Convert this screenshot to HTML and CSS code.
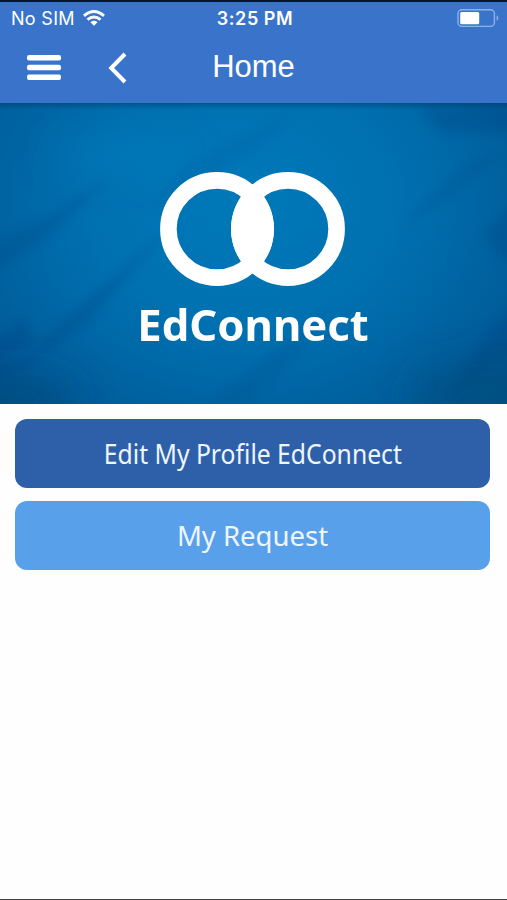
FILE: index.html
```html
<!DOCTYPE html>
<html lang="en">
<head>
  <meta charset="UTF-8">
  <meta name="viewport" content="width=device-width, initial-scale=1.0">
  <title>EdConnect</title>
  <link rel="stylesheet" href="styles.css">
</head>
<body>

<div class="screen">
  <header class="header">
    <div class="status-bar">
      <div class="carrier">
        <span>No SIM</span>
        <svg class="wifi" width="22" height="16" viewBox="0 0 22 16" fill="none" stroke="#fff" stroke-width="2.9">
          <path d="M1 5.8 Q11 -2.6 21 5.8"/>
          <path d="M4.5 9.6 Q11 4.3 17.5 9.6"/>
          <path d="M11 15.8 L7.4 12.2 Q11 9.4 14.6 12.2 Z" fill="#fff" stroke="none"/>
        </svg>
      </div>
      <div class="time">3:25 PM</div>
      <svg class="battery" width="42" height="18" viewBox="0 0 42 18">
        <rect x="1" y=".8" width="36.4" height="16.6" rx="4" fill="none" stroke="#8fb2e6" stroke-width="1.4"/>
        <rect x="3.2" y="3" width="19" height="12.2" rx="1.5" fill="#fff"/>
        <path d="M39.6 6.3 Q41.4 7.4 41.4 9.1 Q41.4 10.8 39.6 11.9 Z" fill="#8fb2e6"/>
      </svg>
    </div>

    <nav class="nav-bar">
      <div class="nav-left">
        <svg class="menu" width="34" height="26" viewBox="0 0 34 26" fill="#fff">
          <rect y="0" width="34" height="5.6" rx="2"/>
          <rect y="9.7" width="34" height="5.6" rx="2"/>
          <rect y="19.4" width="34" height="5.6" rx="2"/>
        </svg>
        <svg class="back" width="20" height="32" viewBox="0 0 20 32" fill="none" stroke="#fff" stroke-width="4">
          <path d="M17 2 L3.2 16 L17 30"/>
        </svg>
      </div>
      <h1 class="title">Home</h1>
    </nav>
  </header>

  <!-- Banner -->
  <section class="banner">
    <svg class="banner-texture" viewBox="0 0 507 301" preserveAspectRatio="none">
      <defs>
        <filter id="soft" x="-30%" y="-30%" width="160%" height="160%">
          <feGaussianBlur stdDeviation="5"/>
        </filter>
        <filter id="softer" x="-50%" y="-50%" width="200%" height="200%">
          <feGaussianBlur stdDeviation="18"/>
        </filter>
      </defs>
      <g fill="#003f80" filter="url(#soft)" opacity=".26">
        <path d="M-10 140 L40 118 L110 75 L40 140 L-10 170 Z" opacity=".8"/>
        <path d="M40 240 L90 195 L165 130 L85 222 L50 245 Z" opacity=".9"/>
        <path d="M-10 265 L40 250 L60 238 L30 262 L-10 280 Z"/>
        <path d="M-10 240 L25 215 L35 240 L-10 262 Z"/>
        <path d="M210 300 L330 205 L300 250 L250 300 Z" opacity=".5"/>
        <path d="M425 100 L470 62 L500 50 L440 100 L400 125 Z" opacity=".6"/>
        <path d="M515 200 L485 235 L450 292 L495 260 L515 250 Z"/>
        <path d="M420 5 L515 0 L515 30 L440 28 Z"/>
        <path d="M190 60 L300 5 L250 50 L150 110 Z" opacity=".3"/>
        <path d="M515 100 L485 130 L500 155 L515 155 Z"/>
      </g>
      <g filter="url(#softer)">
        <ellipse cx="0" cy="295" rx="80" ry="25" fill="#00406e" opacity=".45"/>
        <ellipse cx="500" cy="290" rx="90" ry="35" fill="#00466e" opacity=".4"/>
        <ellipse cx="120" cy="50" rx="70" ry="18" fill="#0083c0" opacity=".3"/>
      </g>
    </svg>
    <div class="brand">
      <svg class="logo" width="186" height="114" viewBox="0 0 186 114">
        <defs>
          <clipPath id="left-disc"><circle cx="57" cy="57" r="57"/></clipPath>
        </defs>
        <g fill="none" stroke="#fff" stroke-width="16.6">
          <circle cx="57" cy="57" r="48.6"/>
          <circle cx="128" cy="57" r="48.6"/>
        </g>
        <circle cx="128" cy="57" r="57" fill="#fff" clip-path="url(#left-disc)"/>
      </svg>
      <div class="brand-name">EdConnect</div>
    </div>
  </section>

  <main class="actions">
    <button class="btn btn-profile"><span>Edit My Profile EdConnect</span></button>
    <button class="btn btn-request">My Request</button>
  </main>
</div>

</body>
</html>
```

FILE: styles.css
```css
* {
  margin: 0;
  padding: 0;
  box-sizing: border-box;
}

body {
  background: #fefefe;
}

.screen {
  display: flex;
  flex-direction: column;
  height: 900px;
  border-bottom: 1px solid #444;
}

svg {
  display: block;
}

.header {
  height: 103px;
  background: #3974ca;
  border-top: 2px solid #0a1424;
  color: #fff;
}

.status-bar {
  display: grid;
  grid-template-columns: 1fr auto 1fr;
  align-items: center;
  height: 32px;
  padding: 0 8px 0 11px;
  font-family: Inter, sans-serif;
  font-size: 18px;
}

.carrier {
  display: flex;
  align-items: center;
  gap: 8px;
  letter-spacing: 0.3px;
}

.time {
  font-weight: 600;
  letter-spacing: 0.55px;
}

.battery {
  justify-self: end;
}

.nav-bar {
  display: grid;
  grid-template-columns: 1fr auto 1fr;
  align-items: center;
  height: 67px;
  padding: 0 27px;
}

.nav-left {
  display: flex;
  align-items: center;
  gap: 47px;
}

.title {
  padding-bottom: 2px;
  font-family: "Liberation Sans", Arial, sans-serif;
  font-size: 31px;
  font-weight: normal;
}

.banner {
  display: grid;
  height: 301px;
  background:
    linear-gradient(rgba(0, 40, 80, 0.35), transparent 7px),
    radial-gradient(ellipse 68% 95% at 48% 33%, #0079b9 0%, #0070b0 45%, #005f9d 80%, #004f88 115%);
}

.banner-texture,
.brand {
  grid-area: 1 / 1;
  width: 100%;
  height: 301px;
}

.brand {
  display: flex;
  flex-direction: column;
  align-items: center;
  padding: 69px 1px 0 0;
  z-index: 1;
}

.brand-name {
  margin-top: 8px;
  font-family: "Noto Sans", sans-serif;
  font-size: 43.6px;
  font-weight: bold;
  line-height: 60px;
  color: #fff;
}

.actions {
  display: flex;
  flex-direction: column;
  gap: 13px;
  padding: 15px 17px 0 15px;
}

.btn {
  height: 69px;
  border: none;
  border-radius: 12px;
  font-family: "Noto Sans", sans-serif;
  font-size: 27.5px;
  color: #eef6ff;
}

.btn-profile {
  background: #2e60aa;
  font-size: 27px;
}

.btn-profile span {
  display: inline-block;
  transform: scaleX(0.915);
}

.btn-request {
  background: #59a0eb;
}
```
